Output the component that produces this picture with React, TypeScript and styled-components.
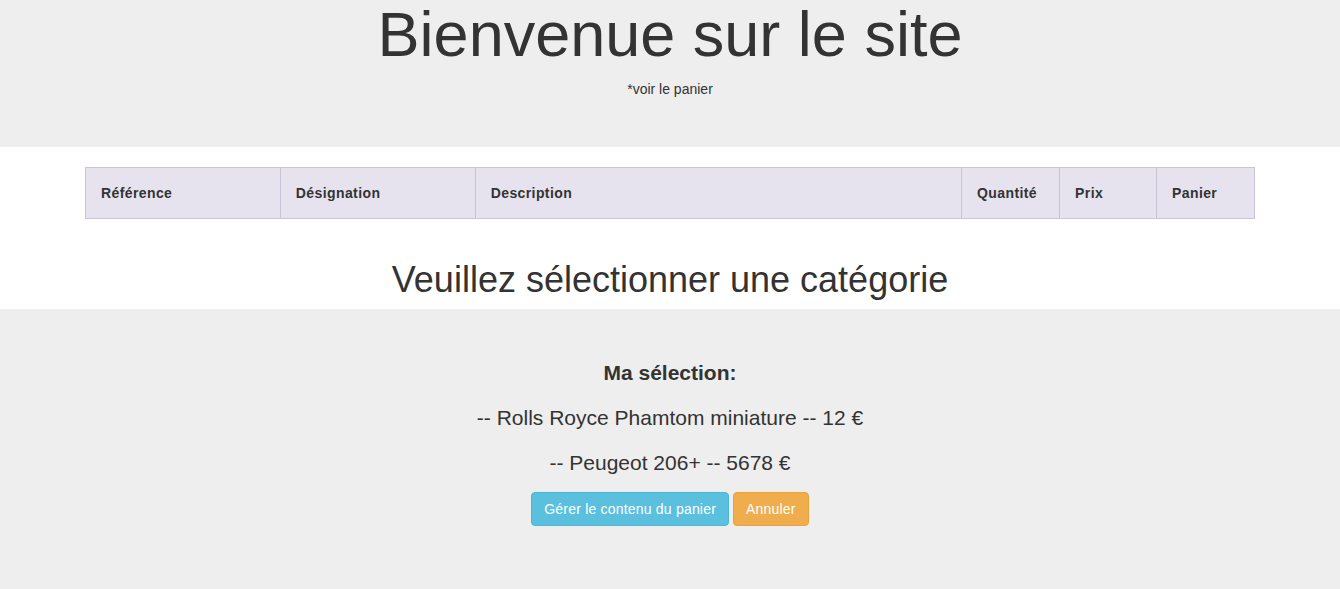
import React from "react";
import styled, { createGlobalStyle } from "styled-components";

const GlobalStyle = createGlobalStyle`
  html, body {
    margin: 0;
    padding: 0;
    background: #eeeeee;
  }
  body {
    font-family: "Liberation Sans", Arial, Helvetica, sans-serif;
    font-size: 14px;
    line-height: 1.42857;
    color: #333333;
  }
  * { box-sizing: border-box; }
`;

const Jumbotron = styled.header`
  background: #eeeeee;
  text-align: center;
  padding: 0 0 48px;
`;

const Title = styled.h1`
  margin: 0;
  font-size: 63px;
  font-weight: 400;
  line-height: 1.1;
`;

const Subtitle = styled.p`
  margin: 10px 0 0;
  font-size: 14px;
  line-height: 20px;
`;

const Main = styled.main`
  background: #ffffff;
  padding: 20px 0 9px;
`;

const Container = styled.div`
  width: 1170px;
  margin: 0 auto;
`;

const Table = styled.table`
  width: 100%;
  border-collapse: collapse;
  border-spacing: 0;
`;

const Th = styled.th<{ $w: number }>`
  width: ${(p) => p.$w}px;
  background: #e6e3ee;
  border: 1px solid #c9c5d6;
  padding: 15px;
  text-align: left;
  font-size: 14px;
  font-weight: 700;
  line-height: 20px;
  letter-spacing: 0.4px;
  color: #333333;
`;

const Heading = styled.h2`
  margin: 41px 0 0;
  text-align: center;
  font-size: 36px;
  font-weight: 400;
  line-height: 1.1;
`;

const Selection = styled.section`
  background: #eeeeee;
  text-align: center;
  padding: 49px 0 64px;
`;

const Line = styled.p<{ $bold?: boolean }>`
  margin: 0 0 15px;
  font-size: 21px;
  line-height: 30px;
  font-weight: ${(p) => (p.$bold ? 700 : 400)};
`;

const ButtonRow = styled.div`
  display: flex;
  justify-content: center;
  gap: 4px;
  margin-top: -1px;
`;

const Button = styled.button<{ $variant: "info" | "warning" }>`
  font-family: "Liberation Sans", Arial, Helvetica, sans-serif;
  font-size: 14px;
  line-height: 20px;
  letter-spacing: 0.2px;
  padding: 6px 12px;
  border-radius: 4px;
  color: #ffffff;
  cursor: pointer;
  background: ${(p) => (p.$variant === "info" ? "#5bc0de" : "#f0ad4e")};
  border: 1px solid ${(p) => (p.$variant === "info" ? "#46b8da" : "#eea236")};
`;

const columns: { label: string; w: number }[] = [
  { label: "Référence", w: 195 },
  { label: "Désignation", w: 195 },
  { label: "Description", w: 487 },
  { label: "Quantité", w: 98 },
  { label: "Prix", w: 97 },
  { label: "Panier", w: 98 },
];

export default function App() {
  return (
    <>
      <GlobalStyle />
      <Jumbotron>
        <Title>Bienvenue sur le site</Title>
        <Subtitle>*voir le panier</Subtitle>
      </Jumbotron>
      <Main>
        <Container>
          <Table>
            <thead>
              <tr>
                {columns.map((c) => (
                  <Th key={c.label} $w={c.w}>
                    {c.label}
                  </Th>
                ))}
              </tr>
            </thead>
          </Table>
          <Heading>Veuillez sélectionner une catégorie</Heading>
        </Container>
      </Main>
      <Selection>
        <Line $bold>Ma sélection:</Line>
        <Line>-- Rolls Royce Phamtom miniature -- 12 €</Line>
        <Line>-- Peugeot 206+ -- 5678 €</Line>
        <ButtonRow>
          <Button $variant="info">Gérer le contenu du panier</Button>
          <Button $variant="warning">Annuler</Button>
        </ButtonRow>
      </Selection>
    </>
  );
}
